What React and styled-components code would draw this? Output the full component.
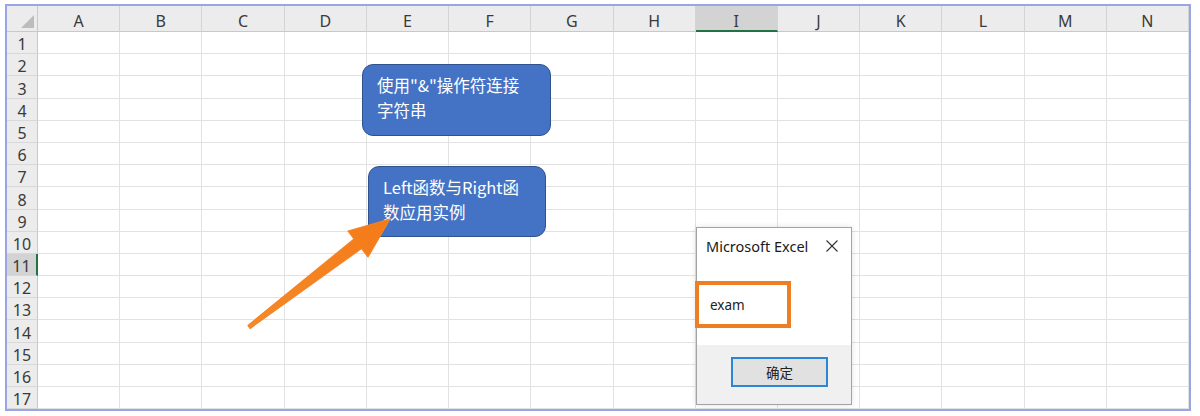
import React from 'react';
import styled, { createGlobalStyle } from 'styled-components';

const Global = createGlobalStyle`
  html, body { margin: 0; padding: 0; background: #fff; }
  body {
    width: 1200px;
    height: 416px;
    overflow: hidden;
    font-family: "Noto Sans", "Noto Sans CJK SC", sans-serif;
  }
`;

const Page = styled.div`
  position: relative;
  width: 1200px;
  height: 416px;
  padding: 4px 0 0 5px;
  box-sizing: border-box;
`;

const Sheet = styled.div`
  width: 1186px;
  box-sizing: border-box;
  border: 2px solid #9aa5e6;
  display: grid;
  grid-template-columns: 31px repeat(14, 1fr);
  grid-template-rows: 26px repeat(17, 22.2px);
  background: #fff;
`;

const Corner = styled.div`
  position: relative;
  background: #ececec;
  border-right: 1px solid #c8c8c8;
  border-bottom: 1px solid #c8c8c8;
  box-sizing: border-box;
  &::after {
    content: "";
    position: absolute;
    right: 3px;
    bottom: 3px;
    width: 13px;
    height: 13px;
    background: #bcbcbc;
    clip-path: polygon(100% 0, 100% 100%, 0 100%);
  }
`;

const ColHeader = styled.div`
  box-sizing: border-box;
  display: flex;
  align-items: flex-end;
  justify-content: center;
  padding-bottom: ${p => (p.$selected ? 1 : 2)}px;
  background: ${p => (p.$selected ? '#d3d3d3' : '#ececec')};
  border-right: 1px solid #d4d4d4;
  border-bottom: ${p => (p.$selected ? '2px solid #217346' : '1px solid #c8c8c8')};
  color: #3a3a3a;
  font-size: 16px;
  line-height: 1;
`;

const RowHeader = styled.div`
  box-sizing: border-box;
  display: flex;
  align-items: flex-end;
  justify-content: center;
  padding-bottom: 1px;
  background: ${p => (p.$selected ? '#d3d3d3' : '#ececec')};
  border-right: ${p => (p.$selected ? '2px solid #217346' : '1px solid #c8c8c8')};
  border-bottom: 1px solid #d8d8d8;
  color: #3a3a3a;
  font-size: 16px;
  line-height: 1;
`;

const Cell = styled.div`
  box-sizing: border-box;
  border-right: 1px solid #e2e2e2;
  border-bottom: 1px solid #e2e2e2;
`;

const Callout = styled.div`
  position: absolute;
  left: ${p => p.$x}px;
  top: ${p => p.$y}px;
  width: ${p => p.$w}px;
  height: ${p => p.$h}px;
  box-sizing: border-box;
  background: #4472c4;
  border: 1.5px solid #2f528f;
  border-radius: 11px;
  color: #fff;
  font-family: "Noto Sans CJK SC", "Noto Sans", sans-serif;
  font-size: 16.5px;
  line-height: 25px;
  padding: 8px 0 0 14px;
  white-space: nowrap;
`;

const ArrowLayer = styled.svg`
  position: absolute;
  left: 0;
  top: 0;
  pointer-events: none;
`;

const Dialog = styled.div`
  position: absolute;
  left: 696px;
  top: 227px;
  width: 156px;
  height: 178px;
  box-sizing: border-box;
  border: 1px solid #a3a3a3;
  background: #fff;
  box-shadow: 0 0 6px rgba(0, 0, 0, 0.12);
  display: flex;
  flex-direction: column;
`;

const TitleBar = styled.div`
  height: 36px;
  display: flex;
  align-items: center;
  justify-content: space-between;
  padding: 0 13px 0 9px;
  font-size: 14.5px;
  color: #1a1a1a;
`;

const DialogBody = styled.div`
  flex: 1;
  display: flex;
  align-items: center;
  padding-left: 13px;
  font-size: 13.5px;
  color: #222;
`;

const Footer = styled.div`
  height: 59px;
  background: #f0f0f0;
  display: flex;
  justify-content: flex-end;
  align-items: flex-start;
  padding: 12px 23px 0 0;
  box-sizing: border-box;
`;

const OkButton = styled.div`
  width: 97px;
  height: 30px;
  box-sizing: border-box;
  border: 2px solid #2a86d6;
  background: #e1e1e1;
  display: flex;
  align-items: center;
  justify-content: center;
  font-family: "Noto Sans CJK SC", sans-serif;
  font-size: 13.5px;
  color: #222;
`;

const Highlight = styled.div`
  position: absolute;
  left: 695px;
  top: 281px;
  width: 96px;
  height: 47px;
  box-sizing: border-box;
  border: 4px solid #ef7d22;
`;

const COLS = ['A', 'B', 'C', 'D', 'E', 'F', 'G', 'H', 'I', 'J', 'K', 'L', 'M', 'N'];
const ROWS = Array.from({ length: 17 }, (_, i) => i + 1);

function CloseIcon() {
  return (
    <svg width="12" height="12" viewBox="0 0 12 12">
      <path d="M0.5 0.5 L11.5 11.5 M11.5 0.5 L0.5 11.5" stroke="#333" strokeWidth="1.1" fill="none" />
    </svg>
  );
}

export default function App() {
  return (
    <Page>
      <Global />
      <Sheet>
        <Corner />
        {COLS.map(c => (
          <ColHeader key={c} $selected={c === 'I'}>{c}</ColHeader>
        ))}
        {ROWS.map(r => (
          <React.Fragment key={r}>
            <RowHeader $selected={r === 11}>{r}</RowHeader>
            {COLS.map(c => (
              <Cell key={c + r} />
            ))}
          </React.Fragment>
        ))}
      </Sheet>

      <Callout $x={362} $y={64} $w={189} $h={72}>
        使用"&amp;"操作符连接<br />字符串
      </Callout>
      <Callout $x={368} $y={166} $w={178} $h={71}>
        Left函数与Right函<br />数应用实例
      </Callout>

      <ArrowLayer width="1200" height="416" viewBox="0 0 1200 416">
        <defs>
          <linearGradient id="ag" x1="249" y1="327" x2="390" y2="219" gradientUnits="userSpaceOnUse">
            <stop offset="0" stopColor="#f58a2a" />
            <stop offset="1" stopColor="#f47a18" />
          </linearGradient>
        </defs>
        <polygon
          points="248,325.5 354,239 348,231 390,219 368,257 361.5,248.5 250,328.5"
          fill="url(#ag)"
          stroke="#f58324"
          strokeWidth="1.2"
          strokeLinejoin="round"
        />
      </ArrowLayer>

      <Dialog>
        <TitleBar>
          <span>Microsoft Excel</span>
          <CloseIcon />
        </TitleBar>
        <DialogBody>exam</DialogBody>
        <Footer>
          <OkButton>确定</OkButton>
        </Footer>
      </Dialog>
      <Highlight />
    </Page>
  );
}
